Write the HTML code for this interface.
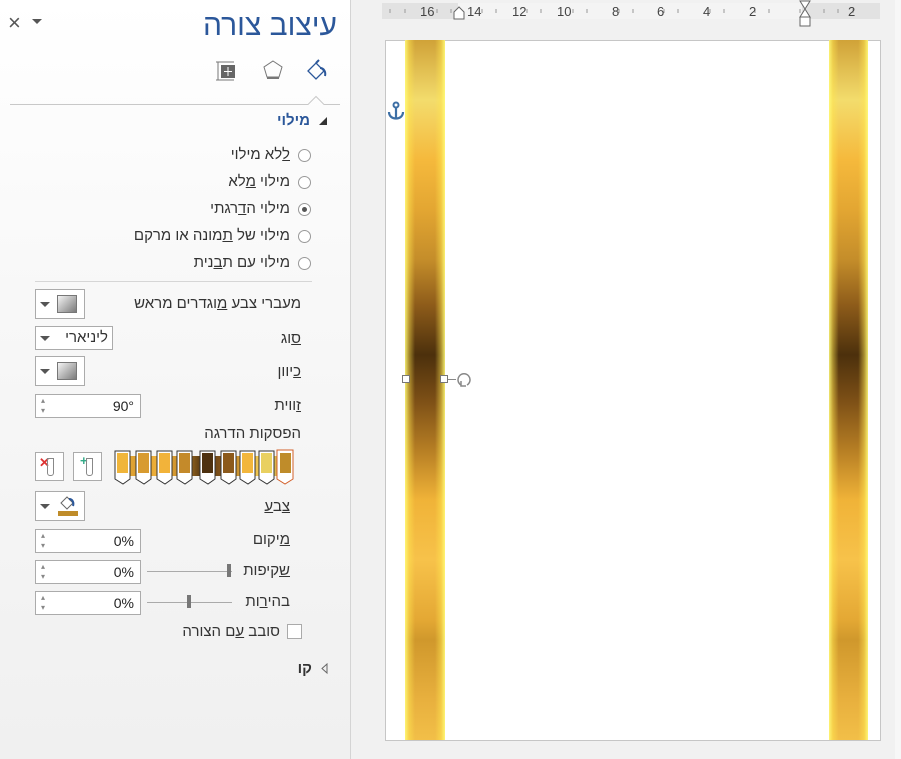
<!DOCTYPE html>
<html><head><meta charset="utf-8"><style>
*{box-sizing:border-box;margin:0;padding:0}
body{width:901px;height:759px;overflow:hidden;background:#f1f1f1;font-family:"Liberation Sans","Noto Sans CJK SC",sans-serif;position:relative;color:#333}
.a{position:absolute}
#pane{left:0;top:0;width:351px;height:759px;background:linear-gradient(#fff 0,#f8f8f8 300px,#f0f0f0 759px);border-right:1px solid #d4d4d4}
.t{position:absolute;direction:rtl;white-space:nowrap;font-size:15px;color:#333}
.rad{position:absolute;width:13px;height:13px;border:1px solid #999;border-radius:50%;background:#fff}
.box{position:absolute;background:#fff;border:1px solid #ababab}
.dd{position:absolute;width:0;height:0;border-left:5px solid transparent;border-right:5px solid transparent;border-top:5px solid #555}
.sw{position:absolute;width:20px;height:18px;background:linear-gradient(135deg,#f4f4f4,#7a7a7a);border:1px solid #777}
.spin{position:absolute;font-size:8px;color:#888}
.val{position:absolute;right:6px;top:3px;font-size:14px;color:#222}
.bar{position:absolute;top:40px;height:700px;
background:linear-gradient(90deg,rgba(255,250,120,.9) 0,rgba(255,230,80,.5) 10%,rgba(0,0,0,0) 25%,rgba(0,0,0,0) 75%,rgba(255,230,80,.5) 90%,rgba(255,250,120,.9) 100%),
linear-gradient(#d0a238 0,#f3dc6c 60px,#f5b93c 120px,#e3a632 170px,#c48d2a 220px,#8e5c1a 265px,#4c300c 315px,#7c4f16 360px,#b67e24 410px,#f0b338 460px,#f7c24a 520px,#e4a834 580px,#d0982c 600px,#e8b03e 660px,#f2bf48 700px)}
</style></head><body>
<div id="pane" class="a">
 <div class="a" style="left:8px;top:10px;font-size:22px;color:#555">×</div>
 <div class="dd" style="left:32px;top:19px"></div>
 <div class="t" style="right:13px;top:9px;font-size:30px;color:#2b579a">עיצוב צורה</div>
 <svg class="a" style="left:212px;top:58px" width="125" height="26" viewBox="0 0 125 26">
  <path d="M4 4h18M4 22h18M6 4v18" stroke="#777" fill="none"/><rect x="9" y="7" width="14" height="13" fill="#666"/><path d="M16 9v9M12 13.5h8" stroke="#fff"/>
  <path d="M61 3l9 6-3 10h-12l-3-10z" stroke="#777" fill="none"/><path d="M55 20h12" stroke="#777" stroke-width="2"/>
  <path d="M96 13l8-8 8 8-8 8z" stroke="#2b579a" fill="none" stroke-width="1.3"/><path d="M104 5l3-3M108 10c4 0 6 4 5 8" stroke="#2b579a" fill="none" stroke-width="2"/>
 </svg>
 <svg class="a" style="left:10px;top:94px" width="330" height="12"><path d="M0 10.5H298l8-8 8 8H330" stroke="#c8c8c8" fill="none"/></svg>
 <svg class="a" style="left:318px;top:116px" width="10" height="10"><path d="M9 1v8H1z" fill="#333"/></svg>
 <div class="t" style="right:40px;top:112px;font-weight:bold;color:#2b579a;font-size:15px">מילוי</div>
 <div class="rad" style="left:298px;top:149px"></div><div class="t" style="right:60px;top:146px"><u>ל</u>לא מילוי</div>
 <div class="rad" style="left:298px;top:176px"></div><div class="t" style="right:60px;top:173px">מילוי <u>מ</u>לא</div>
 <div class="rad" style="left:298px;top:203px"><div class="a" style="left:3px;top:3px;width:5px;height:5px;border-radius:50%;background:#555"></div></div><div class="t" style="right:60px;top:200px">מילוי ה<u>ד</u>רגתי</div>
 <div class="rad" style="left:298px;top:230px"></div><div class="t" style="right:60px;top:227px">מילוי של <u>ת</u>מונה או מרקם</div>
 <div class="rad" style="left:298px;top:257px"></div><div class="t" style="right:60px;top:254px">מילוי עם ת<u>ב</u>נית</div>
 <div class="a" style="left:35px;top:281px;width:277px;height:1px;background:#d6d6d6"></div>

 <div class="t" style="right:49px;top:295px">מעברי צבע <u>מ</u>וגדרים מראש</div>
 <div class="box" style="left:35px;top:289px;width:50px;height:30px"><div class="dd" style="left:4px;top:12px"></div><div class="sw" style="left:21px;top:5px"></div></div>
 <div class="t" style="right:49px;top:330px"><u>ס</u>וג</div>
 <div class="box" style="left:35px;top:326px;width:78px;height:24px"><div class="dd" style="left:4px;top:9px"></div><div class="t" style="right:4px;top:2px">ליניארי</div></div>
 <div class="t" style="right:49px;top:363px"><u>כ</u>יוון</div>
 <div class="box" style="left:35px;top:356px;width:50px;height:30px"><div class="dd" style="left:4px;top:12px"></div><div class="sw" style="left:21px;top:5px"></div></div>
 <div class="t" style="right:49px;top:397px"><u>ז</u>ווית</div>
 <div class="box" style="left:35px;top:394px;width:106px;height:24px"><div class="spin" style="left:5px;top:1px">▴</div><div class="spin" style="left:5px;top:11px">▾</div><div class="val">90°</div></div>
 <div class="t" style="right:49px;top:425px">הפסקות הדרגה</div>
 <div class="box" style="left:35px;top:452px;width:29px;height:29px;font-size:13px"><span class="a" style="left:3px;top:2px;color:#d33;font-weight:bold">✕</span><span class="a" style="left:11px;top:5px;width:7px;height:18px;border:1px solid #888;border-radius:0 0 3px 3px"></span></div>
 <div class="box" style="left:73px;top:452px;width:29px;height:29px;font-size:13px"><span class="a" style="left:6px;top:0px;color:#3a8;font-weight:bold">+</span><span class="a" style="left:12px;top:5px;width:7px;height:18px;border:1px solid #888;border-radius:0 0 3px 3px"></span></div>
 <div class="a" style="left:117px;top:456px;width:172px;height:20px;background:linear-gradient(90deg,#f0b53a,#d89b30,#f2b33a,#c48a2a,#4e3110,#8c5a1c,#f2b63c,#e9d060,#bf8c2a)"></div>
 <svg class="a" style="left:113px;top:449px" width="182" height="36">
  <g stroke="#333" stroke-width="1">
  <path d="M2 2h15v28l-7 5-8-5z" fill="#fff"/><rect x="4" y="4" width="11" height="20" fill="#f0b53a" stroke="none"/>
  <path d="M23 2h15v28l-7 5-8-5z" fill="#fff"/><rect x="25" y="4" width="11" height="20" fill="#d89b30" stroke="none"/>
  <path d="M44 2h15v28l-7 5-8-5z" fill="#fff"/><rect x="46" y="4" width="11" height="20" fill="#f2b33a" stroke="none"/>
  <path d="M64 2h15v28l-7 5-8-5z" fill="#fff"/><rect x="66" y="4" width="11" height="20" fill="#c48a2a" stroke="none"/>
  <path d="M87 2h15v28l-7 5-8-5z" fill="#fff"/><rect x="89" y="4" width="11" height="20" fill="#4e3110" stroke="none"/>
  <path d="M108 2h15v28l-7 5-8-5z" fill="#fff"/><rect x="110" y="4" width="11" height="20" fill="#8c5a1c" stroke="none"/>
  <path d="M127 2h15v28l-7 5-8-5z" fill="#fff"/><rect x="129" y="4" width="11" height="20" fill="#f2b63c" stroke="none"/>
  <path d="M146 2h15v28l-7 5-8-5z" fill="#fff"/><rect x="148" y="4" width="11" height="20" fill="#e9d060" stroke="none"/>
  <path d="M164 1h16v29l-8 5-8-5z" fill="#fff" stroke="#d2602a"/><rect x="167" y="4" width="11" height="20" fill="#bf8c2a" stroke="none"/>
  </g></svg>
 <div class="t" style="right:60px;top:498px"><u>צ</u>ב<u>ע</u></div>
 <div class="box" style="left:35px;top:491px;width:50px;height:30px"><div class="dd" style="left:4px;top:12px"></div>
  <svg class="a" style="left:20px;top:2px" width="24" height="24"><path d="M5 9l6-6 6 6-6 6z" stroke="#666" fill="#fff"/><path d="M13 5c4 0 5 4 4 7" stroke="#2b579a" stroke-width="2" fill="none"/><rect x="2" y="17" width="20" height="5" fill="#bf8c2a"/></svg></div>
 <div class="t" style="right:60px;top:531px"><u>מ</u>יקום</div>
 <div class="box" style="left:35px;top:529px;width:106px;height:24px"><div class="spin" style="left:5px;top:1px">▴</div><div class="spin" style="left:5px;top:11px">▾</div><div class="val">0%</div></div>
 <div class="t" style="right:60px;top:562px"><u>ש</u>קיפות</div>
 <div class="a" style="left:147px;top:571px;width:85px;height:1px;background:#aaa"></div><div class="a" style="left:227px;top:564px;width:4px;height:13px;background:#777"></div>
 <div class="box" style="left:35px;top:560px;width:106px;height:24px"><div class="spin" style="left:5px;top:1px">▴</div><div class="spin" style="left:5px;top:11px">▾</div><div class="val">0%</div></div>
 <div class="t" style="right:60px;top:593px">בהי<u>ר</u>ות</div>
 <div class="a" style="left:147px;top:602px;width:85px;height:1px;background:#aaa"></div><div class="a" style="left:187px;top:595px;width:4px;height:13px;background:#777"></div>
 <div class="box" style="left:35px;top:591px;width:106px;height:24px"><div class="spin" style="left:5px;top:1px">▴</div><div class="spin" style="left:5px;top:11px">▾</div><div class="val">0%</div></div>
 <div class="box" style="left:287px;top:624px;width:15px;height:15px;border-color:#aaa"></div>
 <div class="t" style="right:70px;top:623px">סובב <u>ע</u>ם הצורה</div>
 <svg class="a" style="left:320px;top:663px" width="10" height="12"><path d="M7 1v9L2 5.5z" fill="none" stroke="#666"/></svg>
 <div class="t" style="right:38px;top:660px;font-weight:bold">קו</div>
</div>
<div class="a" style="left:382px;top:3px;width:498px;height:16px;background:#e2e2e2"></div>
<div class="a" style="left:458px;top:3px;width:344px;height:16px;background:#f4f4f4"></div>
<svg class="a" style="left:382px;top:3px" width="498" height="16"><g stroke="#999">
<path d="M8 6v4M23 6v4M55 6v4M69 6v4M100 6v4M114 6v4M145 6v4M159 6v4M191 6v4M205 6v4M237 6v4M251 6v4M282 6v4M296 6v4M328 6v4M342 6v4M373 6v4M387 6v4M418 6v4M442 6v4M456 6v4M471 6v4"/></g></svg>
<div class="a" style="left:382px;top:2px;width:498px;height:18px;font-size:13px;color:#444">
 <span class="a" style="left:38px;top:2px">16</span><span class="a" style="left:85px;top:2px">14</span><span class="a" style="left:130px;top:2px">12</span><span class="a" style="left:175px;top:2px">10</span><span class="a" style="left:230px;top:2px">8</span><span class="a" style="left:275px;top:2px">6</span><span class="a" style="left:321px;top:2px">4</span><span class="a" style="left:367px;top:2px">2</span><span class="a" style="left:466px;top:2px">2</span>
</div>
<svg class="a" style="left:450px;top:0" width="370" height="28"><path d="M4 19v-7l5-5 5 5v7z" fill="#fff" stroke="#666"/><path d="M350 1h10l-5 8 5 8h-10l5-8zM350 17h10v9h-10z" fill="#fff" stroke="#666"/></svg>
<div class="a" style="left:385px;top:40px;width:496px;height:701px;background:#fff;border:1px solid #c6c6c6"></div>
<div class="bar" style="left:405px;width:40px"></div>
<div class="bar" style="left:829px;width:39px"></div>
<svg class="a" style="left:387px;top:101px" width="18" height="20"><circle cx="9" cy="4" r="2.5" fill="none" stroke="#3d6fa5" stroke-width="2"/><path d="M9 6.5v11M2 11c0 4 3 6.5 7 6.5s7-2.5 7-6.5" fill="none" stroke="#3d6fa5" stroke-width="2.2"/></svg>
<div class="a" style="left:402px;top:375px;width:8px;height:8px;background:#fff;border:1px solid #777"></div>
<div class="a" style="left:440px;top:375px;width:8px;height:8px;background:#fff;border:1px solid #777"></div>
<div class="a" style="left:448px;top:379px;width:8px;height:1px;background:#888"></div>
<svg class="a" style="left:455px;top:370px" width="20" height="20"><path d="M6 15a6 6 0 1 1 6 0" fill="none" stroke="#888" stroke-width="1.5"/><path d="M6 11v5h5" fill="none" stroke="#888" stroke-width="1.5"/></svg>
<div class="a" style="left:895px;top:0;width:6px;height:759px;background:#f7f7f7"></div>
</body></html>
